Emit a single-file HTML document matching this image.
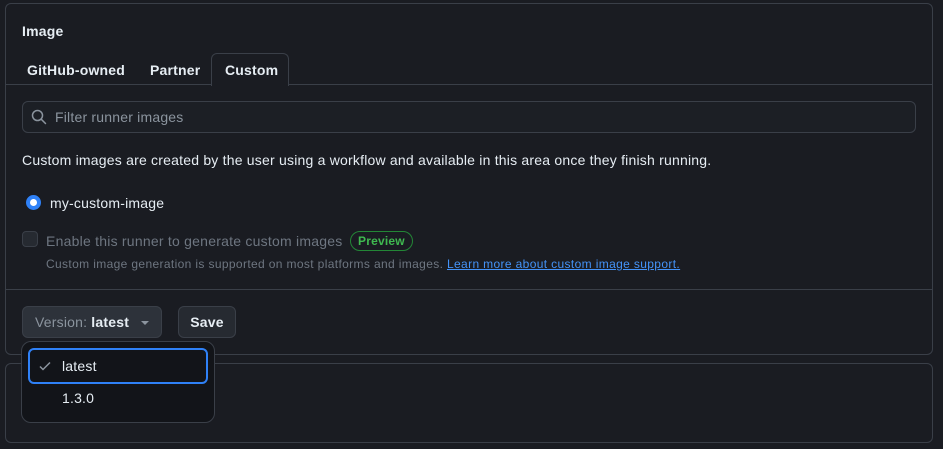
<!DOCTYPE html>
<html><head><style>
*{box-sizing:border-box;margin:0;padding:0}
body{width:943px;height:449px;background:#1a1c22;font-family:"Liberation Sans",sans-serif;color:#e6edf3;position:relative;overflow:hidden;font-size:14px;letter-spacing:0.2px}
.a{position:absolute;white-space:nowrap}
.panel{border:1px solid #3a3f48;border-radius:6px}
</style></head><body>
<div class="a panel" style="left:5px;top:3px;width:928px;height:352px"></div>
<div class="a panel" style="left:5px;top:363px;width:928px;height:80px"></div>
<div class="a" style="left:22px;top:23px;font-weight:bold;font-size:14px">Image</div>
<div class="a" style="left:6px;top:84px;width:926px;border-top:1px solid #3a3f48"></div>
<div class="a" style="left:211px;top:53px;width:78px;height:33px;border:1px solid #3a3f48;border-bottom:none;border-radius:6px 6px 0 0;background:#1a1c22"></div>
<div class="a" style="left:27px;top:62px;font-weight:bold">GitHub-owned</div>
<div class="a" style="left:150px;top:62px;font-weight:bold">Partner</div>
<div class="a" style="left:225px;top:62px;font-weight:bold">Custom</div>
<div class="a" style="left:22px;top:101px;width:894px;height:32px;border:1px solid #3a3f48;border-radius:6px;background:#1c1f25"></div>
<svg class="a" style="left:31px;top:109px" width="16" height="16" viewBox="0 0 16 16"><circle cx="6.5" cy="6.5" r="5" fill="none" stroke="#8b949e" stroke-width="1.5"/><path d="M10.2 10.2L14.5 14.5" stroke="#8b949e" stroke-width="1.5" stroke-linecap="round"/></svg>
<div class="a" style="left:55px;top:109px;color:#8b949e">Filter runner images</div>
<div class="a" style="left:22px;top:152px;letter-spacing:0.21px">Custom images are created by the user using a workflow and available in this area once they finish running.</div>
<div class="a" style="left:26px;top:195px;width:15px;height:15px;border-radius:50%;background:#2f81f7;border:4px solid #2f81f7"><div style="width:7px;height:7px;background:#fff;border-radius:50%"></div></div>
<div class="a" style="left:50px;top:195px">my-custom-image</div>
<div class="a" style="left:22px;top:231px;width:16px;height:16px;border:1px solid #3a3f48;border-radius:4px;background:#262a31"></div>
<div class="a" style="left:46px;top:233px;color:#6e7681;letter-spacing:0.23px">Enable this runner to generate custom images</div>
<div class="a" style="left:350px;top:231px;height:20px;padding:0 7px;border:1px solid #238636;border-radius:10px;color:#3fb950;font-size:12px;font-weight:bold;line-height:18px">Preview</div>
<div class="a" style="left:46px;top:257px;color:#6e7681;font-size:12px;letter-spacing:0.36px">Custom image generation is supported on most platforms and images. <span style="color:#4493f8;text-decoration:underline">Learn more about custom image support.</span></div>
<div class="a" style="left:6px;top:289px;width:926px;border-top:1px solid #3a3f48"></div>
<div class="a" style="left:22px;top:306px;width:140px;height:32px;border:1px solid #3a3f48;border-radius:6px;background:#2d323a;line-height:30px;padding-left:12px;color:#8b949e">Version: <b style="color:#e6edf3">latest</b><span style="position:absolute;left:118px;top:14px;border:4px solid transparent;border-top-color:#8b949e"></span></div>
<div class="a" style="left:178px;top:306px;width:58px;height:32px;border:1px solid #3a3f48;border-radius:6px;background:#262a31;line-height:30px;text-align:center;font-weight:bold">Save</div>
<div class="a" style="left:21px;top:341px;width:194px;height:82px;border:1px solid #3a3f48;border-radius:10px;background:#121419"></div>
<div class="a" style="left:28px;top:348px;width:180px;height:36px;border:2px solid #2f81f7;border-radius:6px"></div>
<svg class="a" style="left:38px;top:359px" width="14" height="14" viewBox="0 0 14 14"><path d="M2 7.5L5 10.5L12 3.5" fill="none" stroke="#8b949e" stroke-width="1.5"/></svg>
<div class="a" style="left:62px;top:358px">latest</div>
<div class="a" style="left:62px;top:390px">1.3.0</div>
</body></html>
